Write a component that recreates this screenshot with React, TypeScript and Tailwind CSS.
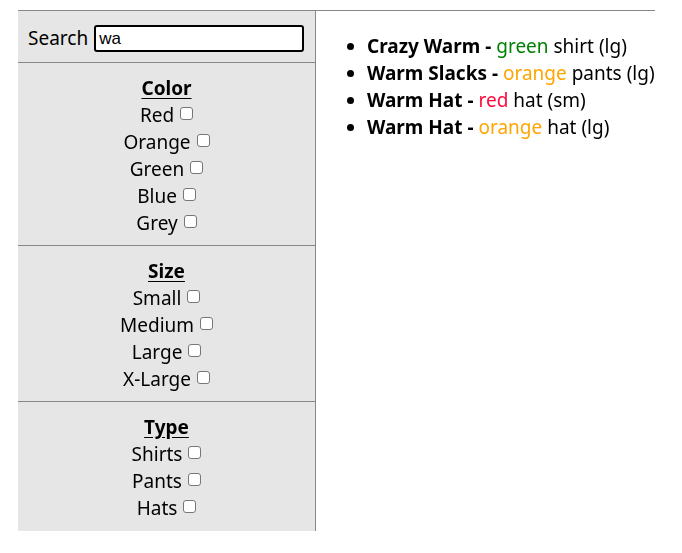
import { useState } from 'react'

type Product = {
  name: string
  color: string
  type: string
  size: string
}

const products: Product[] = [
  { name: 'Crazy Warm', color: 'green', type: 'shirt', size: 'lg' },
  { name: 'Warm Slacks', color: 'orange', type: 'pants', size: 'lg' },
  { name: 'Warm Hat', color: 'red', type: 'hat', size: 'sm' },
  { name: 'Warm Hat', color: 'orange', type: 'hat', size: 'lg' },
]

const colorClass: Record<string, string> = {
  green: 'text-[#008000]',
  orange: 'text-[#ffa500]',
  red: 'text-[#ff0a3c]',
}

const filters = [
  { title: 'Color', options: ['Red', 'Orange', 'Green', 'Blue', 'Grey'] },
  { title: 'Size', options: ['Small', 'Medium', 'Large', 'X-Large'] },
  { title: 'Type', options: ['Shirts', 'Pants', 'Hats'] },
]

function FilterGroup({ title, options, last }: { title: string; options: string[]; last?: boolean }) {
  return (
    <div className={`pt-[12px] ${last ? 'pb-[9px]' : 'pb-[8px] border-b border-[#888]'} text-center`}>
      <div className="font-bold underline underline-offset-[3px]">{title}</div>
      {options.map(opt => (
        <div key={opt}>
          {opt}{' '}
          <input
            type="checkbox"
            className="appearance-none w-[13px] h-[13px] m-0 ml-[1px] align-[2px] bg-white border border-[#767676] rounded-[3px] checked:bg-[#0075ff] checked:border-[#0075ff]"
          />
        </div>
      ))}
    </div>
  )
}

export default function App() {
  const [search, setSearch] = useState('wa')

  return (
    <div
      className="pt-[10px] pl-[18px] text-black text-[19px] leading-[27px]"
      style={{ fontFamily: '"Noto Sans", "Open Sans", sans-serif' }}
    >
      <div className="w-[637px] border-t border-[#888] flex items-start">
        <aside className="w-[298px] shrink-0 bg-[#e6e6e6] border-r border-[#888]">
          <div className="flex items-center gap-[6px] pl-[10px] pr-[11px] pt-[14px] pb-[10px] border-b border-[#888]">
            <label htmlFor="search">Search</label>
            <input
              id="search"
              autoFocus
              value={search}
              onChange={e => setSearch(e.target.value)}
              className="flex-1 min-w-0 w-0 h-[27px] bg-white border-2 border-black rounded-[3px] px-[3px] text-[17px] outline-none caret-black"
              style={{ fontFamily: '"Liberation Sans", Arial, sans-serif' }}
            />
          </div>
          {filters.map((f, i) => (
            <FilterGroup key={f.title} title={f.title} options={f.options} last={i === filters.length - 1} />
          ))}
        </aside>

        <ul className="flex-1 list-disc pl-[51px] pt-[22px] whitespace-nowrap">
          {products.map((p, i) => (
            <li key={i}>
              <b>{p.name} -</b>{' '}
              <span className={colorClass[p.color]}>{p.color}</span> {p.type} ({p.size})
            </li>
          ))}
        </ul>
      </div>
    </div>
  )
}
